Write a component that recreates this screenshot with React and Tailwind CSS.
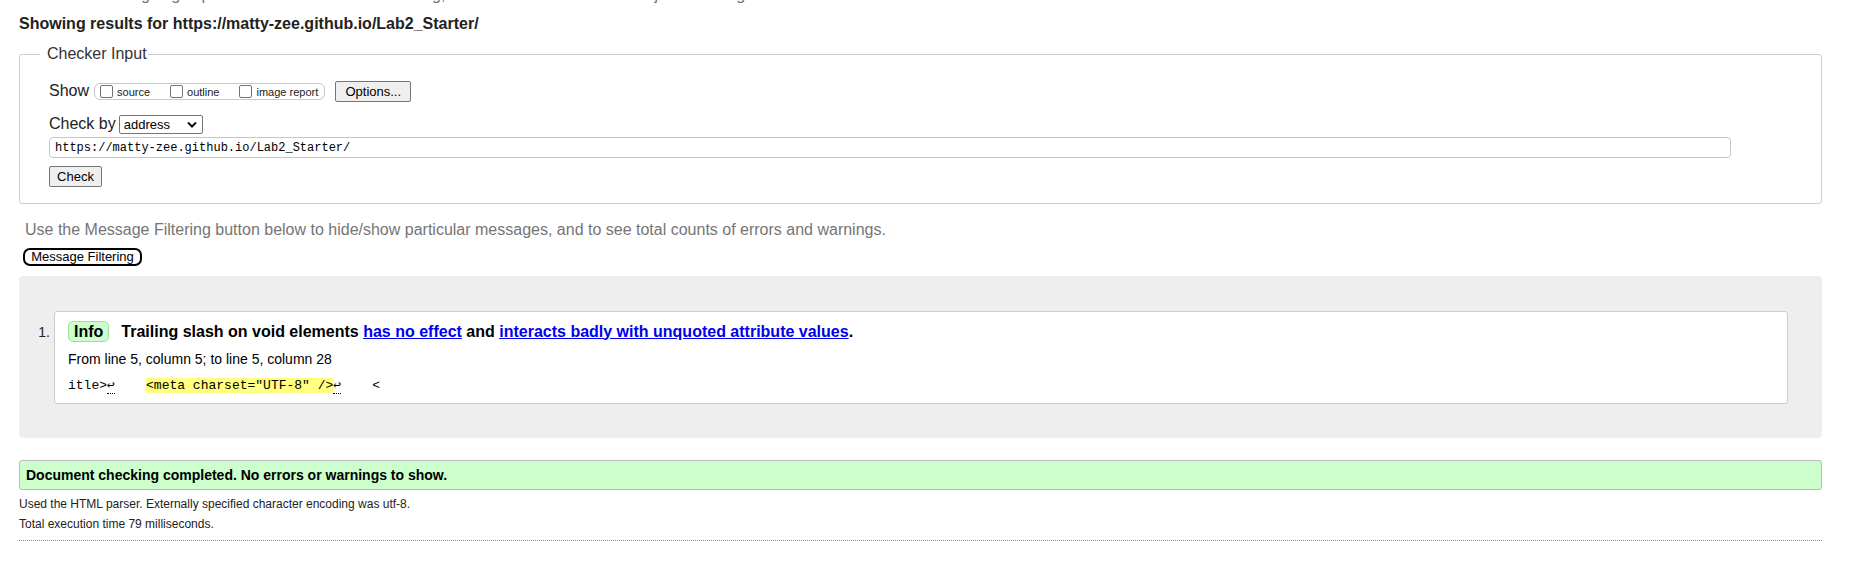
const showOptions = ['source', 'outline', 'image report'];

function Checkbox() {
  return (
    <input
      type="checkbox"
      className="m-0 h-[13px] w-[13px] shrink-0 appearance-none rounded-[2px] border border-[#767676] bg-white"
    />
  );
}

export default function App() {
  return (
    <div className="min-h-screen overflow-hidden bg-white font-['Liberation_Sans',Arial,sans-serif] text-[#222]">
      <div className="ml-[19px] w-[1803px]">
        <p className="-mt-[14px] h-[18px] whitespace-nowrap pl-px text-[16px] leading-[18px] text-[#757575]">
          This tool is an ongoing experiment in better HTML checking, and its behavior remains subject to change.
        </p>

        <h2 className="mt-[11px] text-[16px] font-bold leading-[18px] text-[#222]">
          Showing results for https://matty-zee.github.io/Lab2_Starter/
        </h2>

        <fieldset className="mt-[12px] rounded-[3px] border border-[#cccccc] pb-[16px] pl-[20px] pr-[20px]">
          <legend className="pl-[7px] pr-px text-[16px] leading-[18px] text-[#333]">Checker Input</legend>
          <div className="pl-[9px] pt-[18px]">
            <div className="flex h-[20px] items-center">
              <span className="text-[16px] leading-[18px]">Show</span>
              <div className="ml-[5px] flex h-[17px] items-center rounded-[6px] border border-[#c8c8c8] pl-[5px] pr-[6px]">
                {showOptions.map((label, i) => (
                  <label
                    key={label}
                    className={`flex items-center gap-[4px] text-[11px] leading-[13px] ${i < showOptions.length - 1 ? 'mr-[20px]' : ''}`}
                  >
                    <Checkbox />
                    <span className="pt-[2px]">{label}</span>
                  </label>
                ))}
              </div>
              <button className="ml-[10px] flex h-[21px] w-[76px] items-center justify-center rounded-[2px] border border-[#767676] bg-[#efefef] text-[13px] leading-[15px] text-black">
                Options...
              </button>
            </div>

            <div className="mt-[13px] flex h-[20px] items-center">
              <span className="text-[16px] leading-[18px]">Check by</span>
              <div className="ml-[3px] flex h-[19px] w-[84px] items-center justify-between rounded-[2px] border border-[#767676] bg-white pl-[4px] pr-[5px] text-[13px] leading-[15px] text-black">
                <span>address</span>
                <svg width="10" height="7" viewBox="0 0 10 7" fill="none">
                  <path d="M1 1.5 5 5.5 9 1.5" stroke="#111" strokeWidth="2" />
                </svg>
              </div>
            </div>

            <div className="mt-[3px] flex h-[21px] w-[1682px] items-center rounded-[4px] border border-[#c6c6c6] bg-white pl-[5px] font-['Liberation_Mono','DejaVu_Sans_Mono',monospace] text-[12px] text-black">
              https://matty-zee.github.io/Lab2_Starter/
            </div>

            <button className="mt-[8px] flex h-[21px] w-[53px] items-center justify-center rounded-[2px] border border-[#767676] bg-[#efefef] text-[13px] leading-[15px] text-black">
              Check
            </button>
          </div>
        </fieldset>

        <p className="ml-[6px] mt-[17px] text-[16px] leading-[18px] text-[#757575]">
          Use the Message Filtering button below to hide/show particular messages, and to see total counts of errors and warnings.
        </p>

        <button className="ml-[4px] mt-[9px] flex h-[18px] w-[119px] items-center justify-center rounded-[7px] border-2 border-black bg-white text-[13px] leading-[14px] text-black">
          Message Filtering
        </button>

        <div className="mt-[10px] rounded-[4px] bg-[#eeeeee] pb-[34px] pl-0 pr-[34px] pt-[35px]">
          <ol>
            <li className="flex items-baseline">
              <span className="w-[35px] shrink-0 pr-[4px] text-right text-[14px] leading-[16px] text-[#222]">1.</span>
              <div className="flex-1 rounded-[3px] border border-[#cccccc] bg-white pb-[9px] pl-[13px] pt-[9px]">
                <div className="flex h-[21px] items-center text-[16px] font-bold leading-[18px] text-black">
                  <span className="flex h-[21px] items-center rounded-[5px] border border-[#a6d9a6] bg-[#ccffcc] px-[5px]">
                    Info
                  </span>
                  <span className="ml-[12px]">
                    Trailing slash on void elements{' '}
                    <a href="#" className="text-[#0000ee] underline">has no effect</a>
                    {' '}and{' '}
                    <a href="#" className="text-[#0000ee] underline">interacts badly with unquoted attribute values</a>.
                  </span>
                </div>
                <p className="mt-[9px] text-[14px] leading-[16px] text-black">
                  From line 5, column 5; to line 5, column 28
                </p>
                <p className="mt-[10px] whitespace-pre font-['Liberation_Mono','DejaVu_Sans_Mono',monospace] text-[13px] leading-[17px] text-black">
                  itle&gt;<b className="border-b border-dotted border-black font-normal">↩</b>
                  {'    '}
                  <span className="bg-[#ffff80]">&lt;meta charset="UTF-8" /&gt;</span>
                  <b className="border-b border-dotted border-black font-normal">↩</b>
                  {'    '}&lt;
                </p>
              </div>
            </li>
          </ol>
        </div>

        <div className="mt-[22px] flex h-[30px] items-center rounded-[3px] border border-[#bbbbbb] bg-[#ccffcc] pl-[6px] text-[14px] font-bold leading-[16px] text-black">
          Document checking completed. No errors or warnings to show.
        </div>

        <p className="mt-[7px] text-[12px] leading-[14px] text-[#222]">
          Used the HTML parser. Externally specified character encoding was utf-8.
        </p>
        <p className="mt-[6px] text-[12px] leading-[14px] text-[#222]">Total execution time 79 milliseconds.</p>
        <div className="mt-[9px] border-t border-dotted border-[#888]" />
      </div>
    </div>
  );
}
